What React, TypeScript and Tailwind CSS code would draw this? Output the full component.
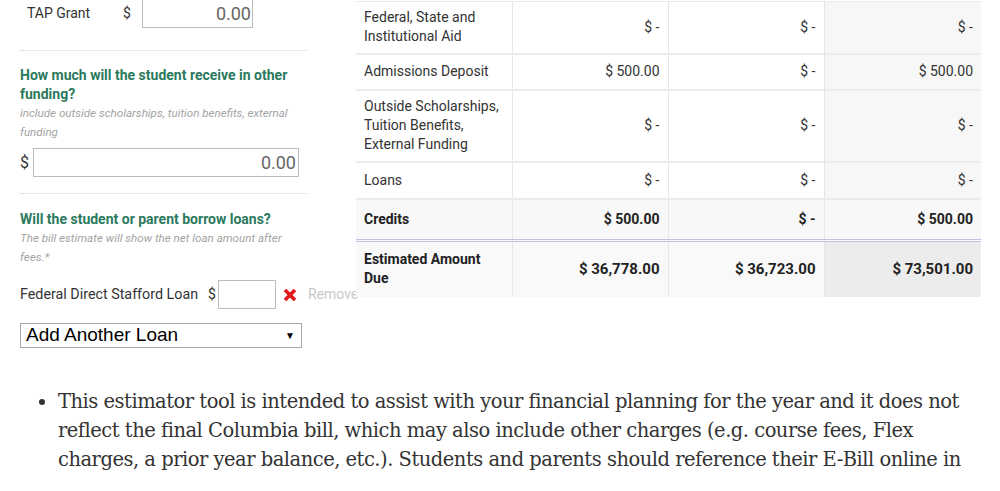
import React from 'react';

const rows = [
  { label: ['Federal, State and', 'Institutional Aid'], vals: ['$ -', '$ -', '$ -'], h: 'h-[52px]' },
  { label: ['Admissions Deposit'], vals: ['$ 500.00', '$ -', '$ 500.00'], h: 'h-[36px]' },
  { label: ['Outside Scholarships,', 'Tuition Benefits,', 'External Funding'], vals: ['$ -', '$ -', '$ -'], h: 'h-[72px]' },
  { label: ['Loans'], vals: ['$ -', '$ -', '$ -'], h: 'h-[37px]' },
];

function RedX() {
  return (
    <svg width="14" height="14" viewBox="0 0 14 14" className="shrink-0">
      <path d="M2 2 L12 12 M12 2 L2 12" stroke="#e3161b" strokeWidth="3.6" strokeLinecap="butt" />
    </svg>
  );
}

function Divider() {
  return <div className="w-[288px] border-t border-dotted border-[#d4d4d4]" />;
}

export default function App() {
  return (
    <div className="w-[1000px] h-[491px] overflow-hidden bg-white text-[#333]" style={{ fontFamily: 'Roboto, "Liberation Sans", sans-serif' }}>
      <div className="flex items-start">
        {/* Left form column */}
        <div className="w-[356px] shrink-0 pl-5 overflow-visible">
          <div className="flex items-center -mt-[2px] h-[30px]">
            <span className="ml-[7px] w-[96px] text-[14px]">TAP Grant</span>
            <span className="text-[14px] w-[19px]">$</span>
            <input
              readOnly
              value="0.00"
              className="w-[111px] h-[30px] border border-[#bdbdbd] text-right pr-[1px] text-[18px] text-[#666] outline-none"
              style={{ fontFamily: 'Roboto, "Liberation Sans", sans-serif' }}
            />
          </div>
          <div className="mt-[22px]"><Divider /></div>

          <div className="mt-[15px] w-[295px] text-[14px] leading-[19px] font-bold text-[#2b7a5d]">
            How much will the student receive in other funding?
          </div>
          <div className="w-[290px] text-[11.6px] leading-[19px] italic text-[#a3a3a3]">
            include outside scholarships, tuition benefits, external funding
          </div>
          <div className="flex items-center mt-[6px] h-[29px]">
            <span className="text-[16px] w-[13px]">$</span>
            <input
              readOnly
              value="0.00"
              className="w-[266px] h-[29px] border border-[#bdbdbd] text-right pr-[2px] text-[18px] text-[#666] outline-none"
              style={{ fontFamily: 'Roboto, "Liberation Sans", sans-serif' }}
            />
          </div>
          <div className="mt-[16px]"><Divider /></div>

          <div className="mt-[16px] text-[14px] leading-[19px] font-bold text-[#2b7a5d]">
            Will the student or parent borrow loans?
          </div>
          <div className="w-[280px] text-[11.6px] leading-[19px] italic text-[#a3a3a3]">
            The bill estimate will show the net loan amount after fees.*
          </div>
          <div className="flex items-center mt-[13px] h-[29px] whitespace-nowrap">
            <span className="text-[14.3px]">Federal Direct Stafford Loan</span>
            <span className="text-[14px] ml-[10px] mr-[2px]">$</span>
            <input readOnly className="w-[58px] h-[29px] border border-[#bdbdbd] outline-none" />
            <span className="ml-[7px]"><RedX /></span>
            <span className="ml-[11px] text-[14px] text-[#c8c8c8]">Remove</span>
          </div>
          <div
            className="mt-[14px] w-[282px] h-[25px] border border-[#a9a9a9] flex items-center justify-between px-[5px] text-[19px] text-black"
            style={{ fontFamily: 'Arial, "Liberation Sans", sans-serif' }}
          >
            <span>Add Another Loan</span>
            <span className="text-[10px] mr-[1px]">▼</span>
          </div>
        </div>

        {/* Summary table */}
        <table className="mt-[1px] w-[625px] border-collapse text-[14px] leading-[19px] table-fixed">
          <colgroup>
            <col className="w-[156px]" />
            <col className="w-[156px]" />
            <col className="w-[156px]" />
            <col className="w-[157px]" />
          </colgroup>
          <tbody>
            {rows.map((r, i) => (
              <tr key={i} className={`${r.h} ${i === 0 ? 'border-t border-[#c9c4e2]' : ''} border-b-2 border-[#ebebeb]`}>
                <td className="px-2 align-middle">
                  {r.label.map(l => <div key={l}>{l}</div>)}
                </td>
                <td className="px-2 text-right border-l border-[#e6e6e6]">{r.vals[0]}</td>
                <td className="px-2 text-right border-l border-[#e6e6e6]">{r.vals[1]}</td>
                <td className="px-2 text-right border-l border-[#e6e6e6] bg-[#f7f7f7]">{r.vals[2]}</td>
              </tr>
            ))}
            <tr className="h-[42px] bg-[#f8f8f8] font-bold text-[#222] border-b-[3px] border-double border-[#c5c1e6]">
              <td className="px-2">Credits</td>
              <td className="px-2 text-right border-l border-[#e6e6e6]">$ 500.00</td>
              <td className="px-2 text-right border-l border-[#e6e6e6]">$ -</td>
              <td className="px-2 text-right border-l border-[#e6e6e6]">$ 500.00</td>
            </tr>
            <tr className="h-[56px] bg-[#f9f9f9] font-bold text-[#222]">
              <td className="px-2">
                <div>Estimated Amount</div>
                <div>Due</div>
              </td>
              <td className="px-2 text-right border-l border-[#e6e6e6] text-[15px]">$ 36,778.00</td>
              <td className="px-2 text-right border-l border-[#e6e6e6] text-[15px]">$ 36,723.00</td>
              <td className="px-2 text-right border-l border-[#e6e6e6] text-[15px] bg-[#ececec]">$ 73,501.00</td>
            </tr>
          </tbody>
        </table>
      </div>

      {/* Note list */}
      <ul
        className="mt-[39px] ml-[58px] w-[920px] list-disc text-[19.5px] leading-[29px] text-[#333]"
        style={{ fontFamily: '"DejaVu Serif", "Liberation Serif", serif' }}
      >
        <li className="pl-0 tracking-[-0.5px]">
          This estimator tool is intended to assist with your financial planning for the year and it does not<br />
          reflect the final Columbia bill, which may also include other charges (e.g. course fees, Flex<br />
          charges, a prior year balance, etc.). Students and parents should reference their E-Bill online in
        </li>
      </ul>
    </div>
  );
}
